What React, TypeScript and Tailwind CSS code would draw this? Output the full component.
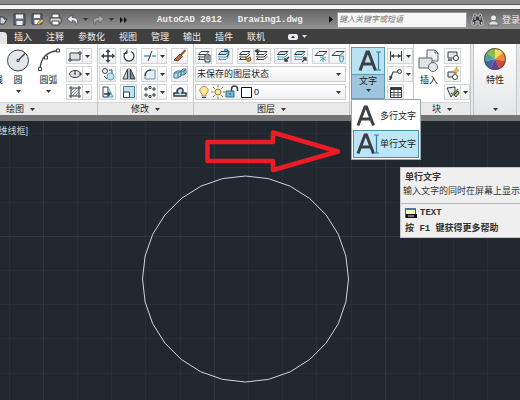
import React from "react";

const INK = "#3a3d42";
const BLUE = "#4f9fbd";
const PALE = "#bfe3f0";

function Caret({ light = false }: { light?: boolean }) {
  return (
    <svg width="5" height="3" viewBox="0 0 5 3" aria-hidden="true" className="shrink-0">
      <path d="M0 0h5L2.5 3z" fill={light ? "#d8d8d8" : "#333"} />
    </svg>
  );
}

function Icon({ children, size = 14 }: { children: React.ReactNode; size?: number }) {
  return (
    <svg width={size} height={size} viewBox="0 0 14 14" fill="none" stroke={INK} strokeWidth="1" aria-hidden="true" className="shrink-0">
      {children}
    </svg>
  );
}

function Tool({ label, split = false, children }: { label: string; split?: boolean; children: React.ReactNode }) {
  return (
    <div className="flex h-4 shrink-0 border border-[#d3d5d8] bg-gradient-to-b from-white to-[#f0f1f3]">
      <button type="button" aria-label={label} className="flex w-[15px] items-center justify-center">
        <Icon>{children}</Icon>
      </button>
      {split && (
        <button type="button" aria-label={label + "选项"} className="flex w-[9px] items-center justify-center border-l border-[#d3d5d8]">
          <Caret />
        </button>
      )}
    </div>
  );
}

function Panel({ title, className = "", titleAlign = "justify-center", children }: { title: string; className?: string; titleAlign?: string; children: React.ReactNode }) {
  return (
    <section className={"flex shrink-0 flex-col border-r border-[#c4c6c9] " + className}>
      <div className="flex h-[58px] bg-white pt-1">{children}</div>
      <button type="button" aria-label={title || "注释"} className={"flex h-[13px] items-center gap-[6px] border-t border-[#d8d8d8] bg-[#e9e9ea] leading-3 " + titleAlign}>
        {title}
        {title && <Caret />}
      </button>
    </section>
  );
}

const layers = (
  <>
    <path d="M4 2.5h8l-3 3H1.500z" fill="#fff" />
    <path d="M3 6.500l-1.500 1.500h7.500l3-3M3 9l-1.500 1.500h7.500l3-3" />
  </>
);

const blueLayers = (
  <>
    <path d="M4 2.500h8l-3 3H1.500z" fill={PALE} />
    <path d="M3 6.500l-1.500 1.500h7.500l3-3M3 9l-1.500 1.500h7.500l3-3" stroke={BLUE} />
  </>
);

function LetterIcon({ cursor = false }: { cursor?: boolean }) {
  return (
    <svg width="24" height="22" viewBox="0 0 24 22" fill="none" aria-hidden="true" className="shrink-0">
      <path d="M2 20.500L9 2h1.500l7 18.500M5 14h9.500" stroke="#3c4046" strokeWidth="3" />
      {cursor && <path d="M18 2h5M20.500 2v18M18 20h5" stroke="#397c9d" strokeWidth="1.200" />}
    </svg>
  );
}

function QuickAccess() {
  return (
    <div className="flex h-full shrink-0 items-center">
      <button type="button" aria-label="打开" className="w-[13px]">
        <svg width="8" height="12" viewBox="0 0 8 12"><path d="M0 3h4v2h3L4 10H0z" fill="#c9d6dd" stroke="#353a40" /></svg>
      </button>
      <button type="button" aria-label="保存" className="w-[18px]">
        <svg width="13" height="13" viewBox="0 0 13 13"><path d="M1 1h11v11H1z" fill="#626c80" stroke="#333a49" /><path d="M3 1.500h7v4H3zM3.500 8h6v4h-6z" fill="#f2f2f2" /></svg>
      </button>
      <button type="button" aria-label="另存为" className="w-[18px]">
        <svg width="14" height="13" viewBox="0 0 14 13"><path d="M1 1h10v10H1z" fill="#626c80" stroke="#333a49" /><path d="M3 1.500h6v3.500H3zM3.500 7h5v4h-5z" fill="#f2f2f2" /><path d="M6 12l1-3 4-3 2 2-4 3z" fill="#e2b45a" stroke="#755325" strokeWidth=".6" /></svg>
      </button>
      <button type="button" aria-label="打印" className="w-[18px]">
        <svg width="13" height="13" viewBox="0 0 13 13"><path d="M3 1h7v4H3z" fill="#fff" stroke="#444" /><path d="M1 5h11v5H1z" fill="#d4d7dc" stroke="#444" /><path d="M3 8h7v4H3z" fill="#fff" stroke="#444" /></svg>
      </button>
      <button type="button" aria-label="放弃" className="w-[16px]">
        <svg width="12" height="12" viewBox="0 0 12 12"><path d="M5 1L0 5l5 4V6.500c3 0 4 1.500 4 4 3-3 2-7-4-7z" fill="#e6edf4" stroke="#3f4650" strokeWidth=".7" /></svg>
      </button>
      <button type="button" aria-label="放弃列表" className="flex w-[9px]"><Caret /></button>
      <button type="button" aria-label="重做" className="w-[17px]">
        <svg width="12" height="12" viewBox="0 0 12 12"><path d="M7 1l5 4-5 4V6.500c-3 0-4 1.500-4 4-3-3-2-7 4-7z" fill="#a5a8ab" stroke="#5b5e62" strokeWidth=".7" /></svg>
      </button>
      <button type="button" aria-label="重做列表" className="flex w-[11px]"><Caret /></button>
      <button type="button" aria-label="更多">
        <svg width="7" height="6" viewBox="0 0 7 6"><path d="M0 0l3 3-3 3zM4 0l3 3-3 3z" fill="#111" /></svg>
      </button>
    </div>
  );
}

function TitleBar() {
  return (
    <header>
      <div className="h-1 bg-[#8b8b8b]" />
      <div className="h-[5px] border-t border-[#555] bg-[#f5f5f5]" />
      <div className="flex h-5 items-center border-t border-[#555] bg-gradient-to-b from-[#666] to-[#949494]">
        <QuickAccess />
        <h1 className="ml-[30px] flex flex-1 gap-4 whitespace-nowrap font-['Liberation_Mono',monospace] text-[9px] font-bold leading-3 text-[#f0f0f0]">
          <span>AutoCAD 2012</span>
          <span>Drawing1.dwg</span>
        </h1>
        <svg width="4" height="7" viewBox="0 0 4 7" aria-hidden="true" className="mr-1"><path d="M0 0l4 3.500L0 7z" fill="#111" /></svg>
        <input
          type="text"
          aria-label="搜索"
          placeholder="键入关键字或短语"
          className="h-4 w-[130px] shrink-0 border border-[#999] bg-[#f6f6f6] px-px text-[8px] italic placeholder:text-[#777]"
        />
        <button type="button" aria-label="查找" className="ml-1">
          <svg width="13" height="13" viewBox="0 0 13 13"><path d="M3 1h2v2h3V1h2l2 7v4H8V8H5v4H1V8z" fill="#353940" stroke="#c9cdd0" strokeWidth=".9" /><path d="M2.500 9v2M10.500 9v2M4 3v4M9 3v4" stroke="#e0e5e9" /></svg>
        </button>
        <button type="button" className="ml-1 flex w-8 items-center gap-[3px] whitespace-nowrap text-[9px] leading-3 text-[#eee]">
          <svg width="11" height="12" viewBox="0 0 11 12" className="shrink-0"><circle cx="5.500" cy="4" r="3" fill="#e9edf0" stroke="#555" strokeWidth=".7" /><path d="M.5 11c0-3 2-3 3.500-4h3c1.500 1 3.500 1 3.500 4z" fill="#dbe1e5" stroke="#555" strokeWidth=".7" /></svg>
          登录
        </button>
      </div>
    </header>
  );
}

const tabs = ["插入", "注释", "参数化", "视图", "管理", "输出", "插件", "联机"];

function Tabs() {
  return (
    <nav className="flex h-[15px] items-center bg-[#3f3f3f] text-[9px] leading-3 text-[#eee]">
      <button type="button" aria-label="常用" className="mr-[7px] h-3 w-[7px] self-end rounded-tr-sm bg-[#e4e4e4]" />
      <div className="flex gap-[14px]">
        {tabs.map((t) => (
          <button type="button" key={t} className="whitespace-nowrap">{t}</button>
        ))}
      </div>
      <button type="button" aria-label="最小化功能区" className="ml-[23px] flex items-center gap-1">
        <svg width="10" height="6" viewBox="0 0 10 6"><rect width="10" height="6" rx="2" fill="#e9edf5" /><path d="M3 4l2-2.500L7 4z" fill="#333" /></svg>
        <Caret light />
      </button>
    </nav>
  );
}

function DrawPanel() {
  return (
    <Panel title="绘图" titleAlign="pl-[6px]" className="w-[98px]">
      <button type="button" className="flex w-[3px] justify-end overflow-hidden whitespace-nowrap pt-[26px] leading-3">多段线</button>
      <button type="button" className="flex w-[30px] flex-col items-center">
        <svg width="24" height="26" viewBox="0 0 24 26" fill="none" stroke={INK}>
          <circle cx="12" cy="12.500" r="10.500" fill="#e3e7eb" strokeWidth="1" />
          <path d="M12 12.500l7-7" strokeWidth="1.200" /><path d="M11 11.500h2v2h-2z" fill="#fff" />
        </svg>
        <span className="leading-3">圆</span>
        <span className="pt-1"><Caret /></span>
      </button>
      <button type="button" className="flex w-[31px] flex-col items-center">
        <svg width="24" height="26" viewBox="0 0 24 26" fill="none" stroke={INK}>
          <path d="M3 21C4 9 10 4 21 2.500" strokeWidth="1.300" />
          <path d="M1.500 19.500h3v3h-3zM7.500 8h3v3h-3zM19.500 1h3v3h-3z" fill="#fff" />
        </svg>
        <span className="whitespace-nowrap leading-3">圆弧</span>
        <span className="pt-1"><Caret /></span>
      </button>
      <div className="ml-[2px] flex flex-col gap-[2px]">
        <Tool label="矩形" split><path d="M2 4h10v7H2z" fill="#dde1e5" /><path d="M1 10h2v2H1zM11 3h2v2h-2z" fill="#fff" /></Tool>
        <Tool label="椭圆" split><ellipse cx="7" cy="7" rx="5.500" ry="3.500" fill="#dde1e5" /><path d="M6 7h2M7 3v4M12 6h1v2h-1z" /></Tool>
        <Tool label="图案填充" split><path d="M3 1v12M11 1v12M1 3h12M1 11h12" /><path d="M3 6l3-3M3 9l6-6M4 11l7-7M7 11l4-4" strokeWidth=".7" /></Tool>
      </div>
    </Panel>
  );
}

function ModifyPanel() {
  return (
    <Panel title="修改" className="w-[96px]">
      <div className="ml-px grid grid-cols-[17px_17px_26px_17px] content-start gap-x-1 gap-y-[2px]">
        <Tool label="移动"><path d="M7 1v12M1 7h12" strokeWidth="1.500" /><path d="M7 0L4.500 3h5zM7 14l-2.500-3h5zM0 7l3-2.500v5zM14 7l-3-2.500v5z" fill={INK} stroke="none" /></Tool>
        <Tool label="旋转"><path d="M5 2.500a5 5 0 1 0 4 0" strokeWidth="1.300" /><path d="M5 .5v4H1.500" /></Tool>
        <Tool label="修剪" split><path d="M1 7h4M9 7h4" stroke={BLUE} strokeWidth="1.500" /><path d="M5 12l4-10M5 7h3" /></Tool>
        <Tool label="删除"><path d="M12.500 1L7 7" stroke="#8a5a32" strokeWidth="2" /><path d="M7 5l2.500 2.500L5 12l-4-1z" fill="#af7045" stroke="#754421" /></Tool>
        <Tool label="复制"><circle cx="4" cy="4" r="2.500" /><circle cx="9.500" cy="9.500" r="3.500" fill={PALE} stroke={BLUE} /><path d="M8 3h3v3M3 9l3 3" /></Tool>
        <Tool label="镜像"><path d="M5.500 2v10H1z" fill="#d3d6da" /><path d="M8.500 2v10H13z" fill={BLUE} /><path d="M7 1v12" strokeWidth=".7" /></Tool>
        <Tool label="圆角" split><path d="M2 12V9c0-4 3-6 6-6h4v9z" fill="#e3eff4" stroke="#7695a5" /><path d="M2 9c0-4 3-6 6-6" strokeWidth="1.500" /></Tool>
        <Tool label="分解"><path d="M1 6l3-2h4v5l-3 2H1zM8 4l2-2h3v4l-2 2H8z" fill={PALE} stroke="#33788f" /><path d="M1 6h4v5M5 6l3-2M8 4h3v4M11 4l2-2" stroke="#33788f" /></Tool>
        <Tool label="拉伸"><path d="M2 2h5v10H2z" /><path d="M7 2l5 10H7z" fill={PALE} stroke={BLUE} /><path d="M3 9h6M7 7l2 2-2 2" strokeWidth="1.300" /></Tool>
        <Tool label="缩放"><path d="M1.500 1.500h11v11h-11z" fill={PALE} stroke="#417e98" /><path d="M1.500 7h6v5.500h-6z" fill="#fff" /></Tool>
        <Tool label="阵列" split><path d="M2 3h2v2H2zM6 1.500h2v2H6zM10 3h2v2h-2zM2 9h2v2H2zM6 10.500h2v2H6zM10 9h2v2h-2z" fill="#fff" strokeWidth="1" /></Tool>
        <Tool label="偏移"><path d="M1 11h12V8H9c3-4-1-6-4-4-2 2 0 4 0 4H1z" fill={PALE} strokeWidth="1.500" /></Tool>
      </div>
    </Panel>
  );
}

function LayerPanel() {
  return (
    <Panel title="图层" titleAlign="pl-[63px]" className="w-[156px]">
      <div className="flex w-[155px] flex-col gap-[2px] pl-px pr-[3px]">
        <div className="flex justify-between">
          <Tool label="图层特性">{layers}<path d="M8 6h5v7H8z" fill="#e4e7ea" /><path d="M9 8h3M9 10h3" /></Tool>
          <Tool label="置为当前图层">{blueLayers}<path d="M7 1c5-1 6 3 3 7" stroke="#256f94" strokeWidth="1.500" /></Tool>
          <div className="flex">
            <Tool label="匹配图层">{layers}<path d="M7 8l3 2 2-2 1 3-3 2z" fill="#d79a47" stroke="#94601f" /></Tool>
            <Tool label="上一个图层">{layers}<path d="M0 2l3-2v4zM1 2h4" fill={INK} /></Tool>
          </div>
          <div className="flex">
            <Tool label="图层隔离">{blueLayers}<path d="M13 8l-4 4M9 9v3h3" strokeWidth="1.300" /></Tool>
            <Tool label="取消隔离">{blueLayers}<path d="M9 13l4-4M10 9h3v3" strokeWidth="1.300" /></Tool>
          </div>
          <div className="flex">
            <Tool label="图层冻结"><path d="M5 2.500h8l-4 4H1z" fill="#eef0f2" /><path d="M9 6v7M6 8l6 3.500M12 8l-6 3.500" stroke={BLUE} /></Tool>
            <Tool label="图层关闭"><path d="M5 2.500h8l-4 4H1z" fill="#eef0f2" /><path d="M8.500 7h4v3l-1 3h-2l-1-3z" fill={PALE} stroke={BLUE} /></Tool>
          </div>
        </div>
        <div className="flex h-4 items-center border border-[#c9cbce] bg-gradient-to-b from-white to-[#eff0f2] pr-1">
          <select aria-label="图层状态" className="h-full flex-1 appearance-none bg-transparent px-px text-[9px] leading-3">
            <option>未保存的图层状态</option>
          </select>
          <Caret />
        </div>
        <div className="flex h-4 items-center border border-[#c9cbce] bg-gradient-to-b from-white to-[#eff0f2] pl-px pr-1">
          <Icon><path d="M5 9C1 6 3 1.500 7 1.500S13 6 9 9v2H5z" fill="#f8e69b" stroke="#a48c48" /><path d="M5 12.500h4" /></Icon>
          <Icon><circle cx="7" cy="7" r="3" fill="#f9e999" stroke="#8c7437" /><path d="M7 0v2.500M7 11.500V14M0 7h2.500M11.500 7H14M2 2l2 2M10 10l2 2M12 2l-2 2M2 12l2-2" stroke="#8c7437" /></Icon>
          <Icon><path d="M1 6h8v6H1z" fill="#73b9d3" stroke="#2f6f8b" /><path d="M6.500 6V4c0-4 6-4 6 0v2" stroke="#34454f" strokeWidth="1.600" /><path d="M5 8v2" /></Icon>
          <Icon><path d="M2.500 2.500h10v10h-10z" fill="#fff" stroke="#111" /></Icon>
          <select aria-label="图层" className="ml-px h-full flex-1 appearance-none bg-transparent text-[9px] leading-3">
            <option>0</option>
          </select>
          <Caret />
        </div>
      </div>
    </Panel>
  );
}

function TextMenu() {
  return (
    <div role="menu" className="absolute left-0 top-full z-10 flex w-[70px] flex-col border border-[#9ba6ab] bg-white p-px">
      <button type="button" role="menuitem" className="flex h-[29px] items-center whitespace-nowrap pl-[3px] leading-3">
        <LetterIcon />多行文字
      </button>
      <button type="button" role="menuitem" className="flex h-7 items-center whitespace-nowrap border border-[#4f8ca5] bg-[#bce6f5] pl-[2px] leading-3">
        <LetterIcon cursor />单行文字
      </button>
    </div>
  );
}

function AnnotatePanel() {
  return (
    <Panel title="" className="w-[64px]">
      <div className="relative -mt-1 ml-px h-[55px] w-[34px] shrink-0 pt-[3px]">
        <div className="flex h-[52px] flex-col border border-[#5e9ab4]">
          <button type="button" aria-label="单行文字" className="flex h-[27px] items-center justify-center border-b border-[#5e9ab4] bg-[#b9e2f2] pl-1">
            <LetterIcon cursor />
          </button>
          <button type="button" aria-expanded="true" className="flex flex-1 flex-col items-center gap-[2px] bg-[#9fc4e0] leading-3">
            文字<Caret />
          </button>
        </div>
        <TextMenu />
      </div>
      <div className="ml-[2px] flex flex-col items-start gap-[2px]">
        <Tool label="标注" split><path d="M1.500 2v10M12.500 2v10M2 7h10" /><path d="M2 7l3-2v4zM12 7L9 5v4z" fill={INK} stroke="none" /></Tool>
        <Tool label="引线" split><path d="M1 13L4 5h4" strokeWidth="1.200" /><circle cx="10.500" cy="4.500" r="2" /><path d="M1 13v-4l2 1z" fill={INK} /></Tool>
        <Tool label="表格"><path d="M1.500 2.500h11v10h-11z" fill="#fff" /><path d="M1 4h12" strokeWidth="2" /><path d="M1 7.500h12M1 10h12M5 4v8M9 4v8" strokeWidth=".8" /></Tool>
      </div>
    </Panel>
  );
}

function BlockPanel() {
  return (
    <Panel title="块" className="w-[57px]">
      <button type="button" className="flex w-[30px] shrink-0 flex-col items-center">
        <svg width="24" height="26" viewBox="0 0 24 26" fill="none" stroke="#5c6268">
          <path d="M10 2h8l3 3v8H10z" fill="#eceef0" /><path d="M18 2v3h3" />
          <path d="M2 10h13v10H2z" fill="#e0e3e6" /><circle cx="16" cy="19" r="4.500" fill="#e5e8eb" />
        </svg>
        <span className="whitespace-nowrap leading-3">插入</span>
      </button>
      <div className="flex flex-col items-start gap-[2px]">
        <Tool label="创建块"><path d="M2 3h9v6H2z" fill="#e3e6e9" /><circle cx="10" cy="9" r="2.500" fill="#fff" /><path d="M2 11h4" strokeWidth="1.500" /></Tool>
        <Tool label="编辑块"><path d="M2 5h7v5H2z" fill="#e3e6e9" /><circle cx="9" cy="10" r="2.500" fill="#fff" /><path d="M11 0L7 5h3l-1 3 4-5h-2z" fill="#efc14c" stroke="#b88321" strokeWidth=".6" /></Tool>
        <Tool label="编辑属性" split><path d="M1 3l8-1v4l-4 6z" fill="#e3e6e9" /><path d="M5 8l2 2 5-6" stroke="#5b8a55" strokeWidth="1.500" /><path d="M8 10l4-4 1 2-3 4z" fill="#e3ae52" /></Tool>
      </div>
    </Panel>
  );
}

const wheel = ["#8fb94b", "#f0dc62", "#ec8b3a", "#d54836", "#6d3e8c", "#3f66ac", "#4fa39b"];

function ColorWheel() {
  const at = (i: number) => {
    const a = (i / wheel.length) * Math.PI * 2 - Math.PI / 2 - 0.9;
    return (12 + 11 * Math.cos(a)).toFixed(2) + " " + (12 + 11 * Math.sin(a)).toFixed(2);
  };
  return (
    <svg width="24" height="24" viewBox="0 0 24 24" aria-hidden="true">
      {wheel.map((c, i) => (
        <path key={c} d={"M12 12L" + at(i) + "A11 11 0 0 1 " + at(i + 1) + "z"} fill={c} />
      ))}
      <circle cx="12" cy="12" r="10.500" fill="none" stroke="#55504e" />
    </svg>
  );
}

function Ribbon() {
  return (
    <div className="flex border-b-[6px] border-[#747474] bg-[#e6e7e9] text-[9px] text-[#222]">
      <DrawPanel />
      <ModifyPanel />
      <LayerPanel />
      <AnnotatePanel />
      <BlockPanel />
      <button type="button" className="ml-[2px] flex w-[44px] shrink-0 flex-col items-center border-x border-[#c4c6c9] bg-gradient-to-b from-white to-[#e4e5e7] pb-1 pt-[3px]">
        <ColorWheel />
        <span className="mt-[3px] flex-1 leading-3">特性</span>
        <Caret />
      </button>
    </div>
  );
}

const circlePoints = Array.from({ length: 28 }, (_, i) => {
  const a = (i / 28) * Math.PI * 2;
  return (245.5 + 103 * Math.sin(a)).toFixed(1) + "," + (158 - 103 * Math.cos(a)).toFixed(1);
}).join(" ");

function Drawing() {
  return (
    <svg className="absolute inset-0 h-full w-full" aria-label="图形">
      <defs>
        <pattern id="grid" x="43" y="115" width="171" height="171" patternUnits="userSpaceOnUse">
          <path d="M34.500 0v171M68.500 0v171M102.500 0v171M137.500 0v171M0 34.500h171M0 68.500h171M0 102.500h171M0 137.500h171" stroke="#272f37" />
          <path d="M.5 0v171M0 .5h171" stroke="#2e3643" />
        </pattern>
      </defs>
      <rect width="100%" height="100%" fill="url(#grid)" />
      <polygon points={circlePoints} fill="none" stroke="#d4d6d8" strokeWidth="1" />
      <path d="M207.500 21H273v-9.500L338 30.500 273 49v-9H207.500z" fill="none" stroke="#ed1c24" strokeWidth="4.500" strokeLinejoin="round" />
    </svg>
  );
}

function HelpTip() {
  return (
    <div role="tooltip" className="absolute left-[400px] right-0 top-[46px] whitespace-nowrap border-y border-l border-[#c8c8c8] bg-[#f0eff0] text-[9px] text-[#333]">
      <div className="h-[35px] pl-[2px] pt-[3px]">
        <p className="pl-[2px] font-bold leading-3">单行文字</p>
        <p className="pt-[2px] leading-3">输入文字的同时在屏幕上显示</p>
      </div>
      <div className="h-[34px] border-t border-[#b8b8b8] px-1 pt-[3px] font-['Liberation_Mono','Noto_Sans_CJK_SC',monospace] font-bold">
        <p className="flex items-center gap-[3px] leading-3">
          <svg width="12" height="12" viewBox="0 0 12 12" aria-hidden="true"><path d="M.5 1.500h10v9H.5z" fill="#fbf6ba" stroke="#555" /><path d="M1 1h9v2H1z" fill="#5473a5" /><path d="M1 7h11v4H1z" fill="#111" /><path d="M3 9h6" stroke="#ddd" /></svg>
          TEXT
        </p>
        <p className="pt-1 leading-3">按 F1 键获得更多帮助</p>
      </div>
    </div>
  );
}

export default function App() {
  return (
    <div className="flex min-h-screen flex-col overflow-hidden bg-[#212830] font-['Liberation_Sans','Noto_Sans_CJK_SC',sans-serif]">
      <TitleBar />
      <Tabs />
      <Ribbon />
      <main className="relative flex-1">
        <Drawing />
        <div className="relative flex w-7 justify-end overflow-hidden whitespace-nowrap pt-1 text-[9px] leading-3 text-[#cfd2d5]">[-][俯视][二维线框]</div>
        <HelpTip />
      </main>
    </div>
  );
}
